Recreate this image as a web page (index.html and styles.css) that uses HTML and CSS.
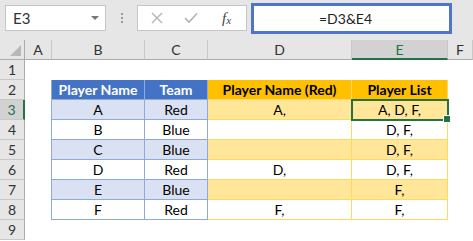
FILE: index.html
```html
<!DOCTYPE html>
<html>
<head>
<meta charset="utf-8">
<link rel="stylesheet" href="styles.css">
</head>
<body>
<div class="app">
  <div class="toolbar">
    <div class="namebox"><span class="ref">E3</span><span class="caret"></span></div>
    <div class="dots"><i></i><i></i><i></i></div>
    <div class="fxbox">
      <svg class="ico" width="12" height="12" viewBox="0 0 12 12"><path d="M1 1L11 11M11 1L1 11" stroke="#b3b3b3" stroke-width="1.4" fill="none"/></svg>
      <svg class="ico" width="14" height="12" viewBox="0 0 14 12"><path d="M1 6L5 10L13 1.5" stroke="#b3b3b3" stroke-width="1.6" fill="none"/></svg>
      <span class="fx">f<sub>x</sub></span>
    </div>
    <div class="formula">=D3&amp;E4</div>
  </div>
  <div class="sheet">
    <div class="ch corner"><span class="tri"></span></div>
    <div class="ch">A</div>
    <div class="ch">B</div>
    <div class="ch">C</div>
    <div class="ch">D</div>
    <div class="ch sel">E</div>
    <div class="ch">F</div>

    <div class="rh">1</div><div class="c"></div><div class="c"></div><div class="c"></div><div class="c"></div><div class="c"></div><div class="c"></div>

    <div class="rh">2</div><div class="c edge"></div>
    <div class="c bh">Player Name</div><div class="c bh">Team</div>
    <div class="c oh">Player Name (Red)</div><div class="c oh">Player List</div><div class="c"></div>

    <div class="rh rsel">3</div><div class="c edge"></div>
    <div class="c bb alt">A</div><div class="c bb alt">Red</div>
    <div class="c ob alt">A,</div><div class="c ob alt active">A, D, F,<span class="handle"></span></div><div class="c"></div>

    <div class="rh">4</div><div class="c edge"></div>
    <div class="c bb">B</div><div class="c bb">Blue</div>
    <div class="c ob"></div><div class="c ob">D, F,</div><div class="c"></div>

    <div class="rh">5</div><div class="c edge"></div>
    <div class="c bb alt">C</div><div class="c bb alt">Blue</div>
    <div class="c ob alt"></div><div class="c ob alt">D, F,</div><div class="c"></div>

    <div class="rh">6</div><div class="c edge"></div>
    <div class="c bb">D</div><div class="c bb">Red</div>
    <div class="c ob">D,</div><div class="c ob">D, F,</div><div class="c"></div>

    <div class="rh">7</div><div class="c edge"></div>
    <div class="c bb alt">E</div><div class="c bb alt">Blue</div>
    <div class="c ob alt"></div><div class="c ob alt">F,</div><div class="c"></div>

    <div class="rh">8</div><div class="c edge"></div>
    <div class="c bb">F</div><div class="c bb">Red</div>
    <div class="c ob">F,</div><div class="c ob">F,</div><div class="c"></div>

    <div class="rh">9</div><div class="c"></div><div class="c"></div><div class="c"></div><div class="c"></div><div class="c"></div><div class="c"></div>
  </div>
</div>
</body>
</html>
```
FILE: styles.css
```css
html, body {
  margin: 0;
  padding: 0;
  background: #ffffff;
}
.app {
  width: 473px;
  height: 241px;
  overflow: hidden;
  font-family: Lato, "Open Sans", sans-serif;
  background: #fff;
}
.toolbar {
  height: 40px;
  background: #e6e6e6;
  display: flex;
  align-items: flex-start;
  box-sizing: border-box;
}
.namebox {
  margin-left: 5px;
  margin-top: 5px;
  width: 101px;
  height: 26px;
  box-sizing: border-box;
  background: #fff;
  border: 1px solid #c6c6c6;
  display: flex;
  align-items: center;
  justify-content: space-between;
  padding: 0 6px 0 7px;
  font-size: 15px;
  color: #333;
}
.caret {
  width: 0;
  height: 0;
  border-left: 4px solid transparent;
  border-right: 4px solid transparent;
  border-top: 4px solid #777;
}
.dots {
  width: 31px;
  height: 36px;
  display: flex;
  flex-direction: column;
  align-items: center;
  justify-content: center;
  gap: 2px;
}
.dots i {
  width: 2px;
  height: 2px;
  background: #9a9a9a;
}
.fxbox {
  margin-top: 5px;
  width: 110px;
  height: 26px;
  box-sizing: border-box;
  background: #fff;
  border: 1px solid #c6c6c6;
  display: flex;
  align-items: center;
  padding-left: 13px;
  gap: 0;
}
.ico:first-child { margin-right: 21px; }
.ico + .ico { margin-right: 24px; }
.fx {
  font-family: "Liberation Serif", serif;
  font-style: italic;
  font-size: 15px;
  color: #444;
}
.fx sub {
  font-size: 11px;
  vertical-align: -1px;
}
.formula {
  margin-left: 4px;
  margin-top: 3px;
  width: 201px;
  height: 31px;
  box-sizing: border-box;
  border: 3px solid #4f76c6;
  background: #fff;
  font-size: 14px;
  color: #222;
  line-height: 25px;
  padding-left: 65px;
}
.sheet {
  display: grid;
  grid-template-columns: 25px 27px 93px 63px 144px 96px 25px;
  grid-auto-rows: 20px;
  font-size: 14px;
}
.sheet > div {
  box-sizing: border-box;
  display: flex;
  align-items: center;
  justify-content: center;
  white-space: nowrap;
}
.ch {
  background: #e6e6e6;
  border-right: 1px solid #c8c8c8;
  border-bottom: 1px solid #ababab;
  color: #333;
  font-size: 14px;
}
.ch.corner {
  position: relative;
  border-right: 1px solid #ababab;
}
.tri {
  position: absolute;
  right: 3px;
  bottom: 3px;
  width: 0;
  height: 0;
  border-left: 11px solid transparent;
  border-bottom: 11px solid #b7b7b7;
}
.ch.sel {
  background: #d2d2d2;
  color: #217346;
  border-bottom: 2px solid #217346;
}
.rh {
  background: #e6e6e6;
  border-right: 1px solid #ababab;
  border-bottom: 1px solid #c8c8c8;
  color: #333;
  font-size: 14px;
}
.rh.rsel {
  background: #d2d2d2;
  color: #217346;
  border-right: 2px solid #217346;
}
.c { color: #000; }
.c.edge { border-right: 1px solid #8ea9db; }
.bh {
  background: #4472c4;
  color: #fff;
  font-weight: bold;
  border-right: 1px solid #8ea9db;
  border-bottom: 1px solid #8ea9db;
}
.oh {
  background: #ffc000;
  color: #000;
  font-weight: bold;
  border-right: 1px solid #ffd966;
  border-bottom: 1px solid #ffd966;
}
.bb {
  border-right: 1px solid #8ea9db;
  border-bottom: 1px solid #8ea9db;
}
.bb.alt { background: #d9e1f2; }
.ob {
  border-right: 1px solid #ffd966;
  border-bottom: 1px solid #ffd966;
}
.ob.alt { background: #ffe699; }
.active {
  position: relative;
  outline: 2px solid #217346;
  outline-offset: -1px;
}
.handle {
  position: absolute;
  right: -4px;
  bottom: -4px;
  width: 6px;
  height: 6px;
  background: #217346;
  border: 1px solid #fff;
}
```
